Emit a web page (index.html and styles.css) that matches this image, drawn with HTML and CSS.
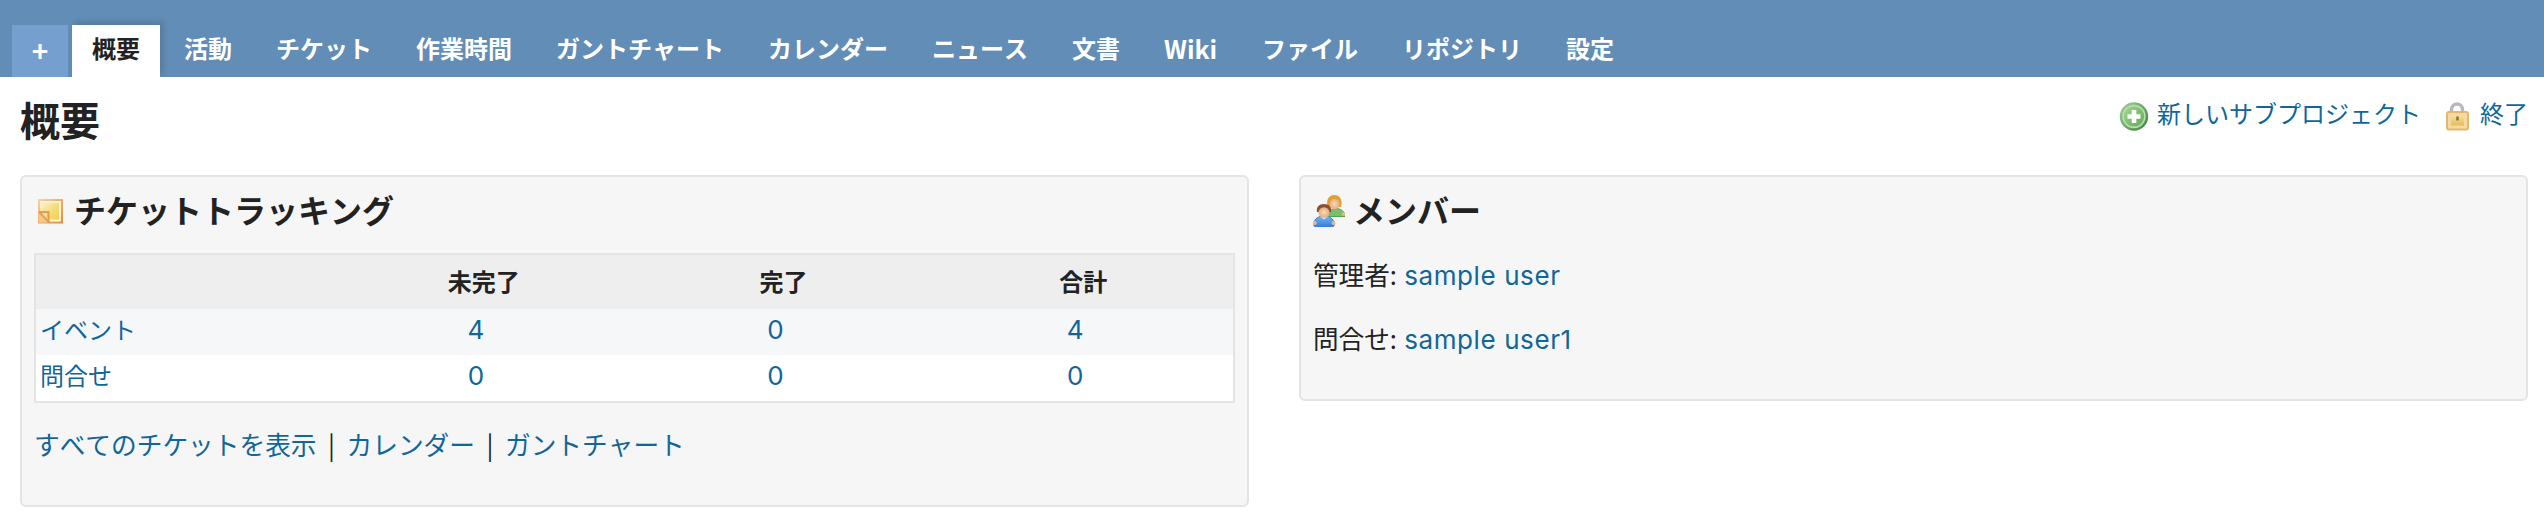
FILE: index.html
```html
<!DOCTYPE html>
<html lang="ja">
<head>
<meta charset="utf-8">
<title>概要</title>
<link rel="stylesheet" href="styles.css">
</head>
<body>
<nav class="menu">
  <a class="tab tab-new">+</a>
  <a class="tab tab-active">概要</a>
  <a class="tab">活動</a>
  <a class="tab">チケット</a>
  <a class="tab">作業時間</a>
  <a class="tab">ガントチャート</a>
  <a class="tab">カレンダー</a>
  <a class="tab">ニュース</a>
  <a class="tab">文書</a>
  <a class="tab tab-wiki">Wiki</a>
  <a class="tab">ファイル</a>
  <a class="tab">リポジトリ</a>
  <a class="tab">設定</a>
</nav>
<main class="content">
  <header class="heading">
    <h2 class="title">概要</h2>
    <div class="contextual">
      <svg class="icon" viewBox="0 0 32 32">
        <defs>
          <linearGradient id="green" x1="0" y1="0" x2="1" y2="1"><stop offset="0" stop-color="#b5dba9"/><stop offset=".5" stop-color="#7fbf70"/><stop offset="1" stop-color="#5fa653"/></linearGradient>
          <linearGradient id="rim" x1="0" y1="0" x2="1" y2="1"><stop offset="0" stop-color="#a5cd9b"/><stop offset="1" stop-color="#39803a"/></linearGradient>
        </defs>
        <circle cx="16" cy="16.500" r="13.200" fill="url(#green)" stroke="url(#rim)" stroke-width="2"/>
        <circle cx="16" cy="16.500" r="10.800" fill="none" stroke="#b9deb0" stroke-width="1.400"/>
        <path d="M16 10v13M9.500 16.500h13" stroke="#fff" stroke-width="4.600"/>
      </svg>
      <a class="action">新しいサブプロジェクト</a>
      <svg class="icon icon-lock" viewBox="0 0 32 32">
        <defs><linearGradient id="gold" x1="0" y1="0" x2="0" y2="1"><stop offset="0" stop-color="#f6e28f"/><stop offset="1" stop-color="#e8b85a"/></linearGradient></defs>
        <path d="M10.500 14V9.500a5.500 5.500 0 0 1 11 0V14" fill="none" stroke="#b8b8b8" stroke-width="3.400"/>
        <rect x="6" y="12" width="21" height="17.500" rx="2" fill="#f3d9a4" stroke="#e3b76e" stroke-width="2"/>
        <rect x="10" y="16" width="13" height="9.500" fill="url(#gold)"/>
        <path d="M16.500 16.500v4" stroke="#806f50" stroke-width="2.500"/>
      </svg>
      <a class="action">終了</a>
    </div>
  </header>
  <div class="columns">
    <section class="box box-issues">
      <h3 class="box-title">
        <svg class="icon" viewBox="0 0 32 32">
          <defs>
            <linearGradient id="note" x1="0" y1="0" x2="1" y2="1"><stop offset="0" stop-color="#fffbe8"/><stop offset=".5" stop-color="#f5dc78"/><stop offset="1" stop-color="#edcb48"/></linearGradient>
            <linearGradient id="edge" x1="0" y1="0" x2="1" y2="1"><stop offset="0" stop-color="#f5cfa7"/><stop offset="1" stop-color="#e58b37"/></linearGradient>
          </defs>
          <rect x="5" y="5" width="23" height="22.500" fill="url(#note)" stroke="url(#edge)" stroke-width="2"/>
          <path d="M7 7h19v18.500H16" fill="none" stroke="#fff6cf" stroke-width="2"/>
          <path d="M5 17h9.500v10.500H5z" fill="#f2ca88"/>
          <path d="M5 17h9.500v10M5 17l10 10.500" fill="none" stroke="#e59a4c" stroke-width="1.800"/>
          <path d="M9 18.500h4v4z" fill="#f9e7a4"/>
        </svg>
        <span>チケットトラッキング</span>
      </h3>
      <table class="issues">
        <thead><tr><th class="tracker"></th><th>未完了</th><th>完了</th><th>合計</th></tr></thead>
        <tbody>
          <tr class="odd"><td class="name">イベント</td><td class="count">4</td><td class="count">0</td><td class="count">4</td></tr>
          <tr><td class="name">問合せ</td><td class="count">0</td><td class="count">0</td><td class="count">0</td></tr>
        </tbody>
      </table>
      <p class="links"><a>すべてのチケットを表示</a><span class="bar">|</span><a>カレンダー</a><span class="bar">|</span><a>ガントチャート</a></p>
    </section>
    <section class="box box-members">
      <h3 class="box-title">
        <svg class="icon" viewBox="0 0 32 32">
          <defs>
            <linearGradient id="blue" x1="0" y1="0" x2="0" y2="1"><stop offset="0" stop-color="#79b5f2"/><stop offset="1" stop-color="#347ddb"/></linearGradient>
            <radialGradient id="face"><stop offset="0" stop-color="#f8d9b8"/><stop offset="1" stop-color="#e5ad80"/></radialGradient>
          </defs>
          <path d="M16 21.500c-1-5 2-8 7-8s9 3 9 8z" fill="#7cbf6b" stroke="#5ba54f"/>
          <circle cx="30.500" cy="19" r="1.800" fill="#e9b78d"/>
          <path d="M14.500 11C13 4 16 0 21.500 0S30 5 28 12z" fill="#e2a12e"/>
          <ellipse cx="21.500" cy="9" rx="5" ry="5.300" fill="url(#face)"/>
          <path d="M1 31c-1-6 3-10 10-10s11 4 10 10l-2 1H3z" fill="url(#blue)" stroke="#3f80cf"/>
          <path d="M7 21.500l4 3 4-3" fill="#d5e8fb"/>
          <circle cx="1.800" cy="28" r="2" fill="#e9b78d"/><circle cx="20.500" cy="28" r="2" fill="#e9b78d"/>
          <path d="M4 17c-1-5 2-8 7-8s8 3 7 8z" fill="#8a5038"/>
          <ellipse cx="11" cy="17.500" rx="5.500" ry="5.300" fill="url(#face)"/>
        </svg>
        <span>メンバー</span>
      </h3>
      <p class="member">管理者: <a class="user">sample user</a></p>
      <p class="member">問合せ: <a class="user">sample user1</a></p>
    </section>
  </div>
</main>
</body>
</html>
```
FILE: styles.css
```css
* { box-sizing: border-box; }
body { margin: 0; background: #fff; color: #222; font-family: "Noto Sans CJK JP", sans-serif; font-size: 24px; font-kerning: none; }
h2, h3, p { margin: 0; }
a { color: #169; white-space: nowrap; }
.menu { display: flex; align-items: flex-end; gap: 4px; height: 77px; padding-left: 12px; background: #628db6; overflow: hidden; }
.tab { height: 52px; padding: 0 20px; color: #fff; font-weight: 700; line-height: 46px; }
.tab-new { width: 56px; padding: 0; text-align: center; background: #759fcf; font-size: 28px; line-height: 50px; }
.tab-active { background: #fff; color: #222; box-shadow: 3px -3px 6px rgba(0, 0, 0, .15); }
.tab-wiki { width: 94px; font-size: 25px; }
.content { padding: 0 16px 0 20px; }
.heading { display: flex; justify-content: space-between; height: 98px; }
.title { margin-top: 13px; font-size: 40px; line-height: 58px; }
.contextual { display: flex; align-items: center; height: 32px; margin-top: 23px; }
.icon { flex: none; width: 32px; height: 32px; }
.action { margin-left: 7px; line-height: 32px; padding-bottom: 7px; }
.icon-lock { margin-left: 20px; }
.columns { display: flex; justify-content: space-between; align-items: flex-start; }
.box { width: 1229px; padding: 0 12px; background: #f6f6f6; border: 2px solid #e4e4e4; border-radius: 6px; }
.box-issues { height: 332px; }
.box-members { height: 226px; }
.box-title { display: flex; align-items: center; gap: 8px; height: 68px; font-size: 32px; line-height: 48px; }
.box-title span { margin-bottom: 5px; }
.issues { width: 1201px; margin-top: 8px; table-layout: fixed; border: 2px solid #e4e4e4; border-spacing: 0; background: #fff; }
.issues th { height: 54px; padding: 0 0 3px; background: #eee; }
.issues .tracker { width: 298px; }
.issues td { height: 46px; padding: 0 16px 7px 0; color: #169; text-align: center; line-height: 36px; }
.issues .name { padding-left: 4px; text-align: left; }
.issues .count { padding-bottom: 5px; font-family: Inter, sans-serif; font-size: 26px; }
.odd td { background: #f6f7f9; }
.links { margin-top: 22px; font-size: 25.700px; line-height: 38px; }
.bar { display: inline-block; width: 30px; text-align: center; }
.member { height: 64px; padding-top: 10px; font-size: 25.600px; line-height: 38px; }
.user { margin-left: 1.500px; font-family: Inter, sans-serif; font-size: 26px; letter-spacing: .6px; }
```
